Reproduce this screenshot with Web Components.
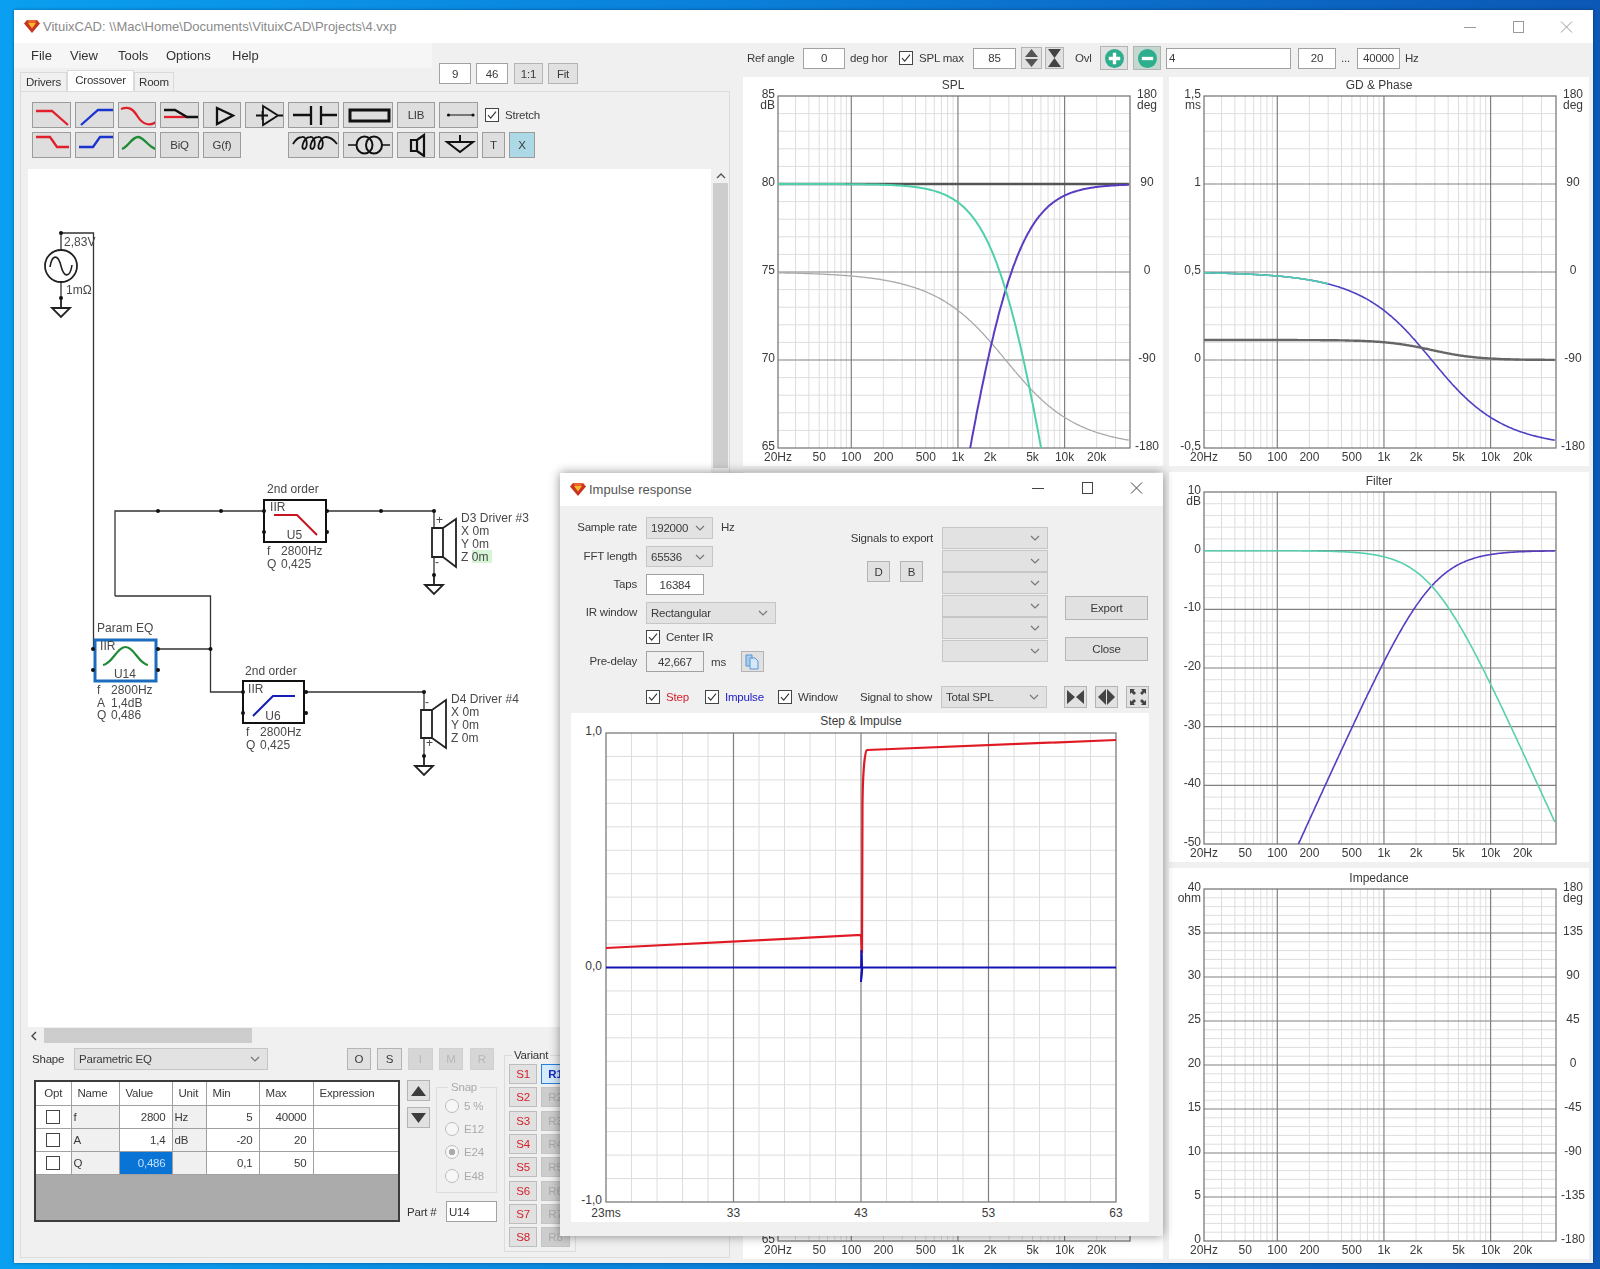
<!DOCTYPE html>
<html>
<head>
<meta charset="utf-8">
<title>VituixCAD</title>
<style>
  html, body { margin: 0; height: 100%; }
  body {
    width: 1600px; height: 1269px; overflow: hidden; box-sizing: border-box;
    padding: 10px 7px 6px 14px; position: relative;
    background: linear-gradient(90deg, #0a9ff0 0, #0a80da 45%, #0c58b6 100%);
    font: 11.5px "Liberation Sans", Arial, sans-serif; letter-spacing: -.2px; color: #333;
  }
  main-window, impulse-dialog { filter: blur(.35px); }
  impulse-dialog { position: absolute; left: 560px; top: 473px; }
</style>
</head>
<body>
<main-window></main-window>
<impulse-dialog></impulse-dialog>

<script>
class Shadow extends HTMLElement {
    constructor() {
        super();
        this.attachShadow({ mode: 'open' });
    }
    connectedCallback() {
        this.shadowRoot.innerHTML = `<style>${this.css()}</style>${this.html()}`;
    }
    css() { return ':host{display:block}'; }
    html() { return '<slot></slot>'; }
}

// ---------- small widgets ----------
class WinBtn extends Shadow {
    css() {
        const w = this.getAttribute('w');
        const h = this.getAttribute('h') || 21;
        return `:host{display:flex;align-items:center;justify-content:center;box-sizing:border-box;
            ${w ? `width:${w}px;` : ''}height:${h}px;background:#e1e1e1;border:1px solid #b4b4b4;color:#3a3a3a;flex:none}
            :host([dim]){color:#b8b8b8;background:#d6d6d6;border-color:#d0d0d0}
            svg{display:block}`;
    }
}
class WinField extends Shadow {
    css() {
        return `:host{display:flex;align-items:center;box-sizing:border-box;flex:none;height:${this.getAttribute('h') || 21}px;
            width:${this.getAttribute('w')}px;background:${this.hasAttribute('gray') ? '#f0f0f0' : '#fff'};border:1px solid #a2a2a2;
            padding:0 2px;justify-content:${this.hasAttribute('left') ? 'flex-start' : 'center'};color:#3a3a3a}`;
    }
}
class WinSelect extends Shadow {
    css() {
        return `:host{display:flex;align-items:center;justify-content:space-between;box-sizing:border-box;flex:none;
            height:${this.getAttribute('h') || 22}px;width:${this.getAttribute('w')}px;background:#e2e2e2;border:1px solid #c6c6c6;
            padding:0 7px 0 4px;color:#3a3a3a}
            svg{display:block}`;
    }
    html() {
        return `<span><slot></slot></span><svg width="10" height="6" viewBox="0 0 10 6"><path d="M1 1l4 4 4-4" fill="none" stroke="#777" stroke-width="1.2"/></svg>`;
    }
}
class WinCheck extends Shadow {
    css() {
        return `:host{display:flex;align-items:center;flex:none;color:${this.getAttribute('color') || '#3a3a3a'}}
            svg{display:block;margin-right:6px}`;
    }
    html() {
        const tick = this.hasAttribute('on') ? '<path d="M3 7.2l2.7 3L11 3.6" fill="none" stroke="#333" stroke-width="1.1"/>' : '';
        return `<svg width="14" height="14" viewBox="0 0 14 14"><rect x=".5" y=".5" width="13" height="13" fill="#fff" stroke="#444"/>${tick}</svg><slot></slot>`;
    }
}
class AppIcon extends Shadow {
    css() { return ':host{display:block;flex:none;width:16px;height:13px}svg{display:block}'; }
    html() {
        return `<svg width="16" height="13" viewBox="0 0 16 13">
            <path d="M0 3.5L3 0h10l3 3.5L8 13z" fill="#c9331f"/>
            <path d="M4 3h8l-4 5.5z" fill="#f6b72c"/>
            <path d="M3 0h10l-2 3H5z" fill="#e8642c"/></svg>`;
    }
}
class CaptionBtns extends Shadow {
    css() {
        return `:host{display:flex;margin-left:auto;gap:var(--cap-gap,31px);padding-right:var(--cap-pad,18px);align-items:center}
            svg{display:block}`;
    }
    html() {
        const c = this.getAttribute('color') || '#888';
        return `<svg width="17" height="12" viewBox="0 0 17 12"><path d="M2 6.5h12" stroke="${c}"/></svg>
            <svg width="17" height="12" viewBox="0 0 17 12"><rect x="3.5" y=".5" width="10" height="11" fill="none" stroke="${c}"/></svg>
            <svg width="17" height="12" viewBox="0 0 17 12"><path d="M3 .5l11 11M14 .5l-11 11" stroke="${c}" fill="none"/></svg>`;
    }
}

// ---------- schematic toolbar glyphs ----------
const stroke = (d, c, w) => `<path d="${d}" fill="none" stroke="${c}" stroke-width="${w || 2.3}"/>`;
const coilPath = () => {
    let d = 'M4 12C7 7 10 5 13 5';
    for (const x of [13, 21, 29]) {
        d += `C${x + 6} 4 ${x + 6} 17 ${x + 2} 17C${x - 2} 17 ${x + 2} 5 ${x + 8} 5`;
    }
    return d + 'C41 5 45 8 48 12';
};
const GLYPHS = {
    lp2: [39, stroke('M3 9H19L35 23', '#e0212b')],
    hp2: [39, stroke('M5 23L22 8H37', '#1b33d0')],
    ap: [39, stroke('M2 7C10 4 14 7 19 15C24 23 31 24 37 20', '#e0212b')],
    shelf: [39, stroke('M3 15H27', '#e0212b') + stroke('M3 8H14L26 15H37', '#111')],
    buf: [39, stroke('M13 6L29 13.5L13 22Z', '#111')],
    amp: [39, stroke('M17 4L32 13.5L17 23ZM32 13.5H38M10 13.5H22M16.5 9V18', '#111', 1.8)],
    cap: [50, stroke('M4 13H22M22 4V23M32 4V23M32 13H48', '#111')],
    res: [50, stroke('M6 8H45V19H6Z', '#111', 3)],
    wire: [39, stroke('M8 13H33', '#111', 1) + '<circle cx="8.5" cy="13" r="1.6" fill="#111"/><circle cx="33" cy="13" r="1.6" fill="#111"/>'],
    lp1: [39, stroke('M3 5H17L24 15H36', '#e0212b')],
    hp1: [39, stroke('M3 15H17L24 5H37', '#1b33d0')],
    bell: [39, stroke('M3 17C9 15 13 5 19 5C25 5 29 15 37 17', '#1e8a34')],
    coil: [50, stroke(coilPath(), '#111', 1.8)],
    xfmr: [50, stroke('M4 13H13M38 13H46', '#111', 1.5) + '<ellipse cx="20.5" cy="13" rx="8" ry="8.5" fill="none" stroke="#111" stroke-width="2"/><ellipse cx="30" cy="13" rx="8" ry="8.5" fill="none" stroke="#111" stroke-width="2"/>'],
    spk: [39, stroke('M13 8H19V19H13ZM19 8L26 3V24L19 19', '#111', 2.2)],
    gnd: [39, stroke('M20 3V10M7 10H33L20 20Z', '#111', 2)]
};
class SchemBtn extends Shadow {
    css() {
        return `:host{display:block;box-sizing:border-box;height:26px;margin-right:4px;background:#dedede;border:1px solid #9c9c9c;overflow:hidden;color:#3a3a3a;
            line-height:24px;text-align:center}
            svg{display:block;margin:-1px auto 0}`;
    }
    html() {
        const g = GLYPHS[this.getAttribute('g')];
        return g ? `<svg width="${g[0]}" height="26" viewBox="0 0 ${g[0]} 26">${g[1]}</svg>` : '<slot></slot>';
    }
}
class SchemToolbar extends Shadow {
    css() {
        return `:host{display:grid;grid-template-columns:43px 43px 42px 43px 42px 43px 55px 54px 42px 43px 27px 26px;
            grid-template-rows:26px 26px;row-gap:4px;height:56px}
            win-check{grid-column:11 / span 3;margin-left:3px}
            .sp{grid-column:6}`;
    }
    html() {
        return `
        <schem-btn g="lp2"></schem-btn><schem-btn g="hp2"></schem-btn><schem-btn g="ap"></schem-btn><schem-btn g="shelf"></schem-btn>
        <schem-btn g="buf"></schem-btn><schem-btn g="amp"></schem-btn><schem-btn g="cap"></schem-btn><schem-btn g="res"></schem-btn>
        <schem-btn>LIB</schem-btn><schem-btn g="wire"></schem-btn><win-check on>Stretch</win-check>
        <schem-btn g="lp1"></schem-btn><schem-btn g="hp1"></schem-btn><schem-btn g="bell"></schem-btn><schem-btn>BiQ</schem-btn>
        <schem-btn>G(f)</schem-btn><span class="sp"></span><schem-btn g="coil"></schem-btn><schem-btn g="xfmr"></schem-btn>
        <schem-btn g="spk"></schem-btn><schem-btn g="gnd"></schem-btn>
        <schem-btn style="margin-right:4px">T</schem-btn><schem-btn style="margin-right:0;background:#add8e6">X</schem-btn>`;
    }
}

// ---------- schematic canvas, a free drawing surface ----------
class SchematicView extends Shadow {
    css() {
        return `:host{display:block;position:relative;background:#fff;overflow:hidden}
            svg{position:absolute;left:0;top:0}
            text{font:12px "Liberation Sans",Arial,sans-serif;letter-spacing:.05px;fill:#484848}`;
    }
    html() {
        const nodes = [[61,233],[61,298],[158,511],[221,511],[381,511],[434,511],[434,575],[210.5,649],[424,692],[424,756],
            [264,511],[264,532],[327,511],[327,532],[93,649],[93,670],[158,649],[158,670],[243,692],[243,713],[306,692],[306,713]];
        const dots = nodes.map(n => `<circle cx="${n[0]}" cy="${n[1]}" r="2" fill="#111"/>`).join('');
        const gnd = (x, y) => `<path d="M${x} ${y - 10}V${y}M${x - 9} ${y}H${x + 9}L${x} ${y + 9}Z" fill="none" stroke="#222" stroke-width="1.8"/>`;
        const t = (x, y, s, a) => `<text x="${x}" y="${y}"${a ? ` text-anchor="${a}"` : ''}>${s}</text>`;
        return `<svg width="682" height="858" viewBox="28 169 682 858">
            <rect x="472" y="550" width="20" height="13" fill="#d6f5d6"/>
            <path d="M61 250V233H93.5V649M115 596V511H264M327 511H434V528M434 557V575M115 596H210.5V692H243M158 649H210.5M306 692H424V710M424 738V756M61 282V298" fill="none" stroke="#333" stroke-width="1.3"/>
            <circle cx="61" cy="266" r="16" fill="#fff" stroke="#222" stroke-width="1.8"/>
            <path d="M50 267C52 254 58 254 61 266C64 278 70 278 72 265" fill="none" stroke="#222" stroke-width="1.6"/>
            ${gnd(61, 308)}${t(64, 246, '2,83V')}${t(66, 294, '1mΩ')}

            <rect x="264" y="500" width="62" height="42" fill="#fff" stroke="#111" stroke-width="2"/>
            <path d="M274 515H297L317 535" fill="none" stroke="#c8141e" stroke-width="2"/>
            ${t(270, 511, 'IIR')}${t(294.5, 539, 'U5', 'middle')}${t(267, 493, '2nd order')}
            ${t(267, 555, 'f')}${t(281, 555, '2800Hz')}${t(267, 568, 'Q')}${t(281, 568, '0,425')}
            <path d="M432 528H443V557H432ZM443 528L456 519V567L443 557" fill="#fff" stroke="#222" stroke-width="1.8"/>
            ${t(436, 524, '+')}${t(435, 566, '-')}${gnd(434, 585)}
            ${t(461, 522, 'D3 Driver #3')}${t(461, 535, 'X 0m')}${t(461, 548, 'Y 0m')}${t(461, 561, 'Z 0m')}

            <rect x="95" y="640" width="61" height="41" fill="#fff" stroke="#1c6cbe" stroke-width="3"/>
            <path d="M103 665C112 664 117 647 125.5 647C134 647 139 664 148 665" fill="none" stroke="#1e8a34" stroke-width="2.2"/>
            ${t(100, 650, 'IIR')}${t(125, 678, 'U14', 'middle')}${t(97, 632, 'Param EQ')}
            ${t(97, 694, 'f')}${t(111, 694, '2800Hz')}${t(97, 707, 'A')}${t(111, 707, '1,4dB')}${t(97, 719, 'Q')}${t(111, 719, '0,486')}

            <rect x="243" y="681" width="61" height="42" fill="#fff" stroke="#111" stroke-width="2"/>
            <path d="M253 716L273 696H295" fill="none" stroke="#1420b4" stroke-width="2"/>
            ${t(248, 693, 'IIR')}${t(273, 720, 'U6', 'middle')}${t(245, 675, '2nd order')}
            ${t(246, 736, 'f')}${t(260, 736, '2800Hz')}${t(246, 749, 'Q')}${t(260, 749, '0,425')}
            <path d="M421 710H432V738H421ZM432 710L446 700V748L432 738" fill="#fff" stroke="#222" stroke-width="1.8"/>
            ${t(425, 706, '-')}${t(426, 747, '+')}${gnd(424, 766)}
            ${t(451, 703, 'D4 Driver #4')}${t(451, 716, 'X 0m')}${t(451, 729, 'Y 0m')}${t(451, 742, 'Z 0m')}
            ${dots}
        </svg>`;
    }
}

// ---------- bottom of the crossover tab ----------
class ParamTable extends Shadow {
    css() {
        return `:host{display:block;box-sizing:border-box;width:366px;height:142px;border:2px solid #3c3c3c;background:#ababab}
            table{border-collapse:collapse;table-layout:fixed;width:100%;background:#fff;color:#3a3a3a}
            td,th{height:23px;padding:0 2px;border:1px solid #a0a0a0;font-weight:normal;text-align:left;box-sizing:border-box;overflow:hidden}
            th{padding-left:6px}
            tr>*:first-child{border-left:0}tr>*:last-child{border-right:0}tr:first-child>*{border-top:0}
            .r{text-align:right;padding-right:6px}
            th.c,.c{text-align:center;padding:0}
            .g{background:#f0f0f0}
            .sel{background:#0a74d6;color:#bfe0ff}
            i{display:block;box-sizing:border-box;width:14px;height:14px;border:1px solid #444;background:#fff;margin:auto}`;
    }
    html() {
        const row = (n, v, u, a, b, sel) => `<tr><td class="c"><i></i></td><td class="g">${n}</td>
            <td class="r ${sel ? 'sel' : ''}">${v}</td><td class="g">${u}</td><td class="r">${a}</td><td class="r">${b}</td><td></td></tr>`;
        return `<table><colgroup><col style="width:35px"><col style="width:48px"><col style="width:53px"><col style="width:34px"><col style="width:53px"><col style="width:54px"><col></colgroup>
            <tr><th class="c">Opt</th><th>Name</th><th>Value</th><th>Unit</th><th>Min</th><th>Max</th><th>Expression</th></tr>
            ${row('f', '2800', 'Hz', '5', '40000')}${row('A', '1,4', 'dB', '-20', '20')}${row('Q', '0,486', '', '0,1', '50', true)}
        </table>`;
    }
}
class SnapGroup extends Shadow {
    css() {
        return `:host{display:block;width:61px;flex:none;color:#aaa}
            fieldset{margin:0;padding:0 0 0 8px;border:1px solid #dcdcdc;height:113px;box-sizing:border-box}
            legend{padding:0 3px;margin-left:3px;line-height:14px}
            div{display:flex;align-items:center;height:23.3px}
            i{display:block;box-sizing:border-box;width:14px;height:14px;border-radius:50%;border:1px solid #bbb;background:#f7f7f7;margin-right:5px}
            i.on{background:radial-gradient(circle,#aaa 0 3px,#f7f7f7 3.5px)}`;
    }
    html() {
        const r = (s, on) => `<div><i class="${on ? 'on' : ''}"></i>${s}</div>`;
        return `<fieldset><legend>Snap</legend>${r('5 %')}${r('E12')}${r('E24', true)}${r('E48')}</fieldset>`;
    }
}
class VariantGroup extends Shadow {
    css() {
        return `:host{display:block;flex:none;width:72px}
            fieldset{margin:0;padding:2px 0 0 4px;border:1px solid #dcdcdc;height:204px;box-sizing:border-box}
            legend{padding:0 2px;margin-left:3px;line-height:14px;color:#333}
            .g{display:grid;grid-template-columns:28px 29px;gap:3.35px 4px;grid-auto-rows:20px}
            b{display:flex;align-items:center;justify-content:center;box-sizing:border-box;font-weight:normal;border:1px solid #bdbdbd}
            .s{background:#e1e1e1;color:#d4202c}
            .d{background:#cdcdcd;color:#aaa;border-color:#c4c4c4}
            .a{background:#d4ebfb;color:#1728c8;border:1px solid #2a7fd8;font-weight:bold}`;
    }
    html() {
        let h = '';
        for (let i = 1; i <= 8; i++) {
            h += `<b class="s">S${i}</b><b class="${i === 1 ? 'a' : 'd'}">R${i}</b>`;
        }
        return `<fieldset><legend>Variant</legend><div class="g">${h}</div></fieldset>`;
    }
}
const triUp = '<svg width="15" height="12" viewBox="0 0 15 12"><path d="M7.5 1L15 11H0z" fill="#3c3c3c"/></svg>';
const triDown = '<svg width="15" height="12" viewBox="0 0 15 12"><path d="M7.5 11L15 1H0z" fill="#3c3c3c"/></svg>';
class PartProps extends Shadow {
    css() {
        return `:host{display:flex;gap:7px;margin-top:5px;padding-left:11px}
            .main{width:465px;flex:none}
            .shape{display:flex;align-items:center;height:22px;padding-right:3px}
            .shape span{width:42px;flex:none}
            .btns{display:flex;gap:6.25px;margin-left:auto}
            .lower{display:flex;margin:10px 0 0 2px}
            .side{display:flex;flex-direction:column;height:142px;width:90px;margin-left:7px;flex:none}
            .top{display:flex;gap:6px}
            .arrows{display:flex;flex-direction:column;gap:6px}
            .part{display:flex;align-items:center;margin-top:auto;justify-content:space-between}`;
    }
    html() {
        return `<div class="main">
            <div class="shape"><span>Shape</span><win-select w="194" h="22">Parametric EQ</win-select>
              <div class="btns"><win-btn w="24.5" h="22">O</win-btn><win-btn w="24.5" h="22">S</win-btn><win-btn w="24.5" h="22" dim>I</win-btn><win-btn w="24.5" h="22" dim>M</win-btn><win-btn w="24.5" h="22" dim>R</win-btn></div></div>
            <div class="lower"><param-table></param-table>
              <div class="side">
                <div class="top"><div class="arrows"><win-btn w="23" h="21">${triUp}</win-btn><win-btn w="23" h="21">${triDown}</win-btn></div><snap-group></snap-group></div>
                <div class="part"><span>Part #</span><win-field w="51" left>U14</win-field></div>
              </div></div>
          </div>
          <variant-group></variant-group>`;
    }
}
class CrossoverPane extends Shadow {
    css() {
        return `:host{display:flex;flex-direction:column;width:723px;flex:none}
            .head{display:flex;height:48px;flex:none}
            .left{width:418px;flex:none}
            .menu{display:flex;height:25px;background:#f6f6f6;padding-left:17px;align-items:center;font-size:13px;letter-spacing:0;color:#333;box-sizing:border-box}
            .menu span:nth-child(1){width:39px}.menu span:nth-child(2){width:48px}.menu span:nth-child(3){width:48px}.menu span:nth-child(4){width:66px}
            .tabs{display:flex;height:23px;padding-left:6px;align-items:flex-end;box-sizing:border-box}
            .tabs span{box-sizing:border-box;height:19px;line-height:18px;background:#f0f0f0;border:1px solid #dadada;border-bottom:0;text-align:center;color:#333}
            .tabs .on{height:21px;background:#fff;line-height:18px;padding-bottom:3px}
            .fields{display:flex;padding:20px 0 0 7px;gap:5px;align-items:flex-start}
            .panel{box-sizing:border-box;margin-left:6px;width:710px;height:1167px;border:1px solid #dcdcdc;padding-top:10px;flex:none}
            schem-toolbar{margin-left:11px}
            .canvas{display:grid;grid-template-columns:683px 17px;grid-template-rows:858px 16px;margin:11px 0 0 7px}
            .v{display:flex;flex-direction:column;align-items:center;padding-left:2px;box-sizing:border-box}
            .v svg{margin-top:4px;flex:none}
            .v i{display:block;width:15px;height:285px;background:#cdcdcd;margin-top:4px}
            .h{display:flex;align-items:center;height:15px;margin-top:1px}
            .h svg{margin:0 7px 0 3px;flex:none}
            .h i{display:block;width:208px;height:15px;background:#cdcdcd}`;
    }
    html() {
        return `<div class="head"><div class="left">
              <div class="menu"><span>File</span><span>View</span><span>Tools</span><span>Options</span><span>Help</span></div>
              <div class="tabs"><span style="width:47px">Drivers</span><span class="on" style="width:67px">Crossover</span><span style="width:40px">Room</span></div>
            </div>
            <div class="fields"><win-field w="32">9</win-field><win-field w="32">46</win-field><win-btn w="29" style="margin-left:1px">1:1</win-btn><win-btn w="30">Fit</win-btn></div>
          </div>
          <div class="panel">
            <schem-toolbar></schem-toolbar>
            <div class="canvas">
              <schematic-view></schematic-view>
              <div class="v"><svg width="10" height="6" viewBox="0 0 10 6"><path d="M1 5l4-4 4 4" fill="none" stroke="#555" stroke-width="1.4"/></svg><i></i></div>
              <div class="h"><svg width="6" height="10" viewBox="0 0 6 10"><path d="M5 1L1 5l4 4" fill="none" stroke="#444" stroke-width="1.4"/></svg><i></i></div>
            </div>
            <part-props></part-props>
          </div>`;
    }
}

// ---------- frequency response charts ----------
const F0 = 2800;
const magLp = f => { const x = f / F0; return 1 / (1 + x * x); };
const db = v => 20 * Math.log10(v);
const phase = f => -2 * (180 / Math.PI) * Math.atan(f / F0);
const CURVES = {
    spl: p => [
        p(phase, 'phase', '#a9a9a9', 1.3),
        p(() => 80, 'l', '#555', 2.4),
        p(f => 80 + db(1 - magLp(f)), 'l', '#5a3cc0', 2),
        p(f => 80 + db(magLp(f)), 'l', '#4fd0ac', 2)
    ],
    gd: p => [
        p(phase, 'phase', '#4d3fc4', 1.6),
        p(phase, 'phase', '#4fd0ac', 1.6, 300),
        p(f => 0.1137 * magLp(f), 'l', '#666', 2.4)
    ],
    filter: p => [
        p(f => db(1 - magLp(f)), 'l', '#5a3cc0', 1.6),
        p(f => db(magLp(f)), 'l', '#58cfae', 1.6)
    ]
};
class LogChart extends Shadow {
    css() {
        return `:host{display:block;background:#fff;overflow:hidden}
            svg{display:block}
            text{font:12px "Liberation Sans",Arial,sans-serif;letter-spacing:0;fill:#3a3a3a}`;
    }
    html() {
        const cfg = JSON.parse(this.getAttribute('data'));
        const W = 352;
        const H = 352;
        const X = 35;
        const Y = cfg.h - 18 - H;
        const fx = f => X + Math.min(W, Math.max(0, 73.3 + (Math.log10(f) - 2) * 106.65));
        const top = cfg.yTop;
        const bot = cfg.yBot;
        const yOf = (v, a, b) => Y + (a - v) / (a - b) * H;
        let g = '';
        // minor verticals
        for (const dec of [10, 100, 1000, 10000]) {
            for (let m = 2; m <= 9; m++) {
                const f = dec * m;
                if (f <= 20 || f >= 40000) continue;
                g += `<line x1="${fx(f)}" x2="${fx(f)}" y1="${Y}" y2="${Y + H}" stroke="#dedede"/>`;
            }
        }
        const n = cfg.major * 5;
        for (let i = 1; i < n; i++) {
            if (i % 5 === 0) continue;
            const y = Y + i * H / n;
            g += `<line x1="${X}" x2="${X + W}" y1="${y}" y2="${y}" stroke="#dedede"/>`;
        }
        for (let i = 1; i < cfg.major; i++) {
            const y = Y + i * H / cfg.major;
            g += `<line x1="${X}" x2="${X + W}" y1="${y}" y2="${y}" stroke="#808080" stroke-width="1.2"/>`;
        }
        for (const f of [100, 1000, 10000]) {
            g += `<line x1="${fx(f)}" x2="${fx(f)}" y1="${Y}" y2="${Y + H}" stroke="#808080" stroke-width="1.2"/>`;
        }
        g += `<rect x="${X}" y="${Y}" width="${W}" height="${H}" fill="none" stroke="#707070" stroke-width="1.2"/>`;

        // curves
        let c = '';
        const plot = (fn, axis, color, sw, fmax) => {
            let d = '';
            const hi = fmax || 40000;
            for (let i = 0; i <= 400; i++) {
                const f = 20 * Math.pow(hi / 20, i / 400);
                const v = fn(f);
                const y = axis === 'phase' ? yOf(v, 180, -180) : yOf(v, top, bot);
                d += `${i ? 'L' : 'M'}${fx(f).toFixed(1)} ${y.toFixed(1)}`;
            }
            return `<path d="${d}" fill="none" stroke="${color}" stroke-width="${sw}"/>`;
        };
        if (cfg.curves) c = CURVES[cfg.curves](plot).join('');

        // labels
        let t = '';
        if (cfg.title) t += `<text x="${X + W / 2 - 1}" y="${Y - 7}" text-anchor="middle">${cfg.title}</text>`;
        (cfg.left || []).forEach((s, i, a) => {
            const y = Y + i * H / (a.length - 1);
            t += `<text x="${X - 3}" y="${y + 2}" text-anchor="end">${s}</text>`;
        });
        if (cfg.lu) t += `<text x="${X - 3}" y="${Y + 13}" text-anchor="end">${cfg.lu}</text>`;
        (cfg.right || []).forEach((s, i, a) => {
            const y = Y + i * H / (a.length - 1);
            t += `<text x="${X + W + 17}" y="${y + 2}" text-anchor="middle">${s}</text>`;
        });
        if (cfg.ru) t += `<text x="${X + W + 17}" y="${Y + 13}" text-anchor="middle">${cfg.ru}</text>`;
        if (cfg.only) t += `<text x="${X - 3}" y="${Y + H + 2}" text-anchor="end">${cfg.only}</text>`;
        [[20, '20Hz'], [50, '50'], [100, '100'], [200, '200'], [500, '500'], [1000, '1k'], [2000, '2k'], [5000, '5k'], [10000, '10k'], [20000, '20k']].forEach(p => {
            const x = p[0] === 20 ? X : fx(p[0]);
            t += `<text x="${x}" y="${Y + H + 13}" text-anchor="middle">${p[1]}</text>`;
        });
        return `<svg width="420" height="${cfg.h}" viewBox="0 0 420 ${cfg.h}">
            <defs><clipPath id="pl"><rect x="${X}" y="${Y}" width="${W}" height="${H}"/></clipPath></defs>
            ${g}<g clip-path="url(#pl)">${c}</g>${t}</svg>`;
    }
}
class TopControls extends Shadow {
    css() {
        return `:host{display:flex;align-items:center;height:34px;box-sizing:border-box;padding:0 0 4px 10px;color:#3a3a3a}
            span{white-space:nowrap;flex:none}
            svg{display:block}`;
    }
    html() {
        const cir = (inner) => `<svg width="19" height="19" viewBox="0 0 20 20"><circle cx="10" cy="10" r="10" fill="#2dae8c"/>${inner}</svg>`;
        return `<span style="width:56px">Ref angle</span>
          <win-field w="42">0</win-field><span style="margin-left:5px;width:44px">deg hor</span>
          <win-check on style="margin-left:5px;width:74px">SPL max</win-check>
          <win-field w="43">85</win-field>
          <win-btn w="21" h="22" style="margin-left:5px"><svg width="13" height="18" viewBox="0 0 13 18"><path d="M6.5 0L13 8H0zM6.5 18L13 10H0z" fill="#555"/></svg></win-btn>
          <win-btn w="19" h="22" style="margin-left:3px"><svg width="13" height="18" viewBox="0 0 13 18"><path d="M0 0H13L6.5 9zM0 18H13L6.5 9z" fill="#444"/></svg></win-btn>
          <span style="margin-left:11px;width:25px">Ovl</span>
          <win-btn w="28" h="24">${cir('<path d="M10 4V16M4 10H16" stroke="#fff" stroke-width="3.5"/>')}</win-btn>
          <win-btn w="28" h="24" style="margin-left:5px;background:#c4d8d0">${cir('<path d="M4 10H16" stroke="#fff" stroke-width="3.5"/>')}</win-btn>
          <win-field w="125" left style="margin-left:5px">4</win-field>
          <win-field w="38" style="margin-left:7px">20</win-field>
          <span style="margin-left:5px;width:16px">...</span>
          <win-field w="43">40000</win-field>
          <span style="margin-left:5px">Hz</span>`;
    }
}
class ChartsPane extends Shadow {
    css() {
        return `:host{display:flex;flex-direction:column;width:856px;flex:none}
            .grid{display:grid;grid-template-columns:420px 420px;grid-template-rows:389px 390px 391px;column-gap:6px;row-gap:6px;margin-left:6px}`;
    }
    html() {
        const j = o => JSON.stringify(o).replace(/"/g, '&quot;');
        const spl = { h: 389, major: 4, title: 'SPL', yTop: 85, yBot: 65, left: ['85', '80', '75', '70', '65'], lu: 'dB', right: ['180', '90', '0', '-90', '-180'], ru: 'deg', curves: 'spl' };
        const gd = { h: 389, major: 4, title: 'GD &amp; Phase', yTop: 1.5, yBot: -0.5, left: ['1,5', '1', '0,5', '0', '-0,5'], lu: 'ms', right: ['180', '90', '0', '-90', '-180'], ru: 'deg', curves: 'gd' };
        const filt = { h: 390, major: 6, title: 'Filter', yTop: 10, yBot: -50, left: ['10', '0', '-10', '-20', '-30', '-40', '-50'], lu: 'dB', curves: 'filter' };
        const imp = { h: 391, major: 8, title: 'Impedance', yTop: 40, yBot: 0, left: ['40', '35', '30', '25', '20', '15', '10', '5', '0'], lu: 'ohm', right: ['180', '135', '90', '45', '0', '-45', '-90', '-135', '-180'], ru: 'deg' };
        const hidden = { h: 391, major: 4, yTop: 85, yBot: 65, only: '65' };
        return `<top-controls></top-controls>
          <div class="grid">
            <log-chart data="${j(spl)}"></log-chart><log-chart data="${j(gd)}"></log-chart>
            <div style="background:#fff"></div><log-chart data="${j(filt)}"></log-chart>
            <log-chart data="${j(hidden)}"></log-chart><log-chart data="${j(imp)}"></log-chart>
          </div>`;
    }
}
class MainWindow extends Shadow {
    css() {
        return `:host{display:flex;flex-direction:column;width:1579px;height:1253px;background:#f0f0f0;box-shadow:0 0 3px rgba(0,0,0,.4)}
            .title{display:flex;align-items:center;height:33px;flex:none;background:#fff;padding-left:10px;color:#8a8a8a;font-size:13px;letter-spacing:0;box-sizing:border-box;--cap-gap:31px;--cap-pad:18px}
            .title span{margin-left:3px}
            .body{display:flex;flex:1}`;
    }
    html() {
        return `<div class="title"><app-icon></app-icon><span>VituixCAD: \\\\Mac\\Home\\Documents\\VituixCAD\\Projects\\4.vxp</span><caption-btns color="#9a9a9a"></caption-btns></div>
          <div class="body"><crossover-pane></crossover-pane><charts-pane></charts-pane></div>`;
    }
}

// ---------- impulse response dialog ----------
class StepChart extends Shadow {
    css() {
        return `:host{display:block;background:#fff;margin:0 14px 0 11px;height:509px;flex:none}
            svg{display:block}
            text{font:12px "Liberation Sans",Arial,sans-serif;letter-spacing:0;fill:#3a3a3a}`;
    }
    html() {
        const X = 35, Y = 20, W = 510, H = 469;
        let g = '';
        for (let i = 1; i < 20; i++) {
            if (i % 5) g += `<line x1="${X + i * 25.5}" x2="${X + i * 25.5}" y1="${Y}" y2="${Y + H}" stroke="#dedede"/>`;
            if (i % 10) g += `<line x1="${X}" x2="${X + W}" y1="${Y + i * H / 20}" y2="${Y + i * H / 20}" stroke="#dedede"/>`;
        }
        for (let i = 1; i < 4; i++) {
            g += `<line x1="${X + i * W / 4}" x2="${X + i * W / 4}" y1="${Y}" y2="${Y + H}" stroke="#808080" stroke-width="1.2"/>`;
        }
        g += `<line x1="${X}" x2="${X + W}" y1="${Y + H / 2}" y2="${Y + H / 2}" stroke="#808080" stroke-width="1.2"/>`;
        g += `<rect x="${X}" y="${Y}" width="${W}" height="${H}" fill="none" stroke="#707070" stroke-width="1.2"/>`;
        const red = 'M35 235L290 222L291 240L291.5 90C292 55 294 38 296 37L545 27';
        const blue = 'M35 254.5H288L290 254.5L290.5 237L291 254.5L290 269L291.5 254.5L293 254.5H545';
        let t = `<text x="${X + W / 2}" y="12" text-anchor="middle">Step &amp; Impulse</text>`;
        [['1,0', Y + 2], ['0,0', Y + H / 2 + 2], ['-1,0', Y + H + 2]].forEach(l => { t += `<text x="${X - 4}" y="${l[1]}" text-anchor="end">${l[0]}</text>`; });
        ['23ms', '33', '43', '53', '63'].forEach((s, i) => { t += `<text x="${X + i * W / 4}" y="${Y + H + 15}" text-anchor="middle">${s}</text>`; });
        return `<svg width="578" height="509" viewBox="0 0 578 509">${g}
            <path d="${blue}" fill="none" stroke="#1414b4" stroke-width="1.8"/>
            <path d="${red}" fill="none" stroke="#e01a24" stroke-width="2.2"/>
            <path d="M290.5 237L291 254.5L290 269" fill="none" stroke="#1414b4" stroke-width="1.8"/>${t}</svg>`;
    }
}
class ImpulseDialog extends Shadow {
    css() {
        return `:host{display:flex;flex-direction:column;width:603px;height:763px;background:#f0f0f0;box-shadow:0 0 10px rgba(0,0,0,.45);color:#3a3a3a}
            .title{display:flex;align-items:center;height:33px;flex:none;background:#fff;padding-left:10px;font-size:13px;letter-spacing:0;color:#555;box-sizing:border-box;--cap-gap:32px;--cap-pad:18px}
            .title span{margin-left:3px}
            caption-btns{margin-bottom:4px}
            .form{display:flex;height:169px;margin-top:11px;flex:none}
            .f{display:grid;grid-template-columns:77px 130px;grid-template-rows:29px 28px 28px 25px 24px 21px;column-gap:9px;width:216px;flex:none}
            .f>span{text-align:right;padding-top:4px}
            .cell{display:flex;align-items:flex-start}
            .sig{width:125px;margin-left:32px;flex:none;display:flex;flex-direction:column;align-items:flex-end;padding-top:15px;box-sizing:border-box}
            .db{display:flex;gap:10px;margin:17px 10px 0 0}
            .sels{width:106px;margin-left:9px;flex:none;padding-top:10px;display:flex;flex-direction:column;gap:.6px}
            .act{margin-left:17px;width:83px;flex:none;padding-top:79px;display:flex;flex-direction:column;gap:17px}
            .checks{display:flex;align-items:center;height:22px;margin-top:0;flex:none;padding-left:86px}
            .checks span{white-space:nowrap;text-align:right}
            .icons{display:flex;gap:8px;margin-left:17px}
            step-chart{margin-top:5px}`;
    }
    html() {
        const six = Array(6).fill('<win-select w="106" h="22"></win-select>').join('');
        const bow = '<svg width="17" height="14" viewBox="0 0 17 14"><path d="M0 0L8 7L0 14ZM17 0L9 7L17 14Z" fill="#444"/></svg>';
        const dia = '<svg width="17" height="16" viewBox="0 0 17 16"><path d="M8 0L0 8L8 16ZM9 0L17 8L9 16Z" fill="#444"/></svg>';
        const exp = '<svg width="16" height="16" viewBox="0 0 16 16"><path d="M0 0H5L3.5 1.5L6 4L4 6L1.5 3.5L0 5ZM16 0V5L14.5 3.5L12 6L10 4L12.5 1.5L11 0ZM0 16V11L1.5 12.5L4 10L6 12L3.5 14.5L5 16ZM16 16H11L12.5 14.5L10 12L12 10L14.5 12.5L16 11Z" fill="#444"/></svg>';
        const copy = '<svg width="14" height="16" viewBox="0 0 14 16"><path d="M1 1H7V12H1Z" fill="#a6cdf0" stroke="#5b96d0"/><path d="M5 4H10L13 7V15H5Z" fill="#d4e8fa" stroke="#5b96d0"/></svg>';
        return `<div class="title"><app-icon></app-icon><span>Impulse response</span><caption-btns color="#444"></caption-btns></div>
          <div class="form">
            <div class="f">
              <span>Sample rate</span><div class="cell"><win-select w="67">192000</win-select><span style="margin:4px 0 0 8px">Hz</span></div>
              <span>FFT length</span><div class="cell"><win-select w="67" h="21">65536</win-select></div>
              <span>Taps</span><div class="cell"><win-field w="58">16384</win-field></div>
              <span>IR window</span><div class="cell"><win-select w="130">Rectangular</win-select></div>
              <span></span><div class="cell" style="padding-top:3px"><win-check on>Center IR</win-check></div>
              <span>Pre-delay</span><div class="cell" style="align-items:center"><win-field w="58" gray>42,667</win-field><span style="margin-left:7px">ms</span><win-btn w="23" style="margin-left:15px">${copy}</win-btn></div>
            </div>
            <div class="sig"><span>Signals to export</span><div class="db"><win-btn w="23">D</win-btn><win-btn w="23">B</win-btn></div></div>
            <div class="sels">${six}</div>
            <div class="act"><win-btn w="83" h="24">Export</win-btn><win-btn w="83" h="24">Close</win-btn></div>
          </div>
          <div class="checks">
            <win-check on color="#d4202c" style="width:59px">Step</win-check>
            <win-check on color="#2020c8" style="width:73px">Impulse</win-check>
            <win-check on style="width:81px">Window</win-check>
            <span style="width:73px">Signal to show</span>
            <win-select w="106" style="margin-left:9px">Total SPL</win-select>
            <div class="icons"><win-btn w="23" h="22">${bow}</win-btn><win-btn w="23" h="22">${dia}</win-btn><win-btn w="23" h="22">${exp}</win-btn></div>
          </div>
          <step-chart></step-chart>`;
    }
}

const ELEMENTS = {
    'win-btn': WinBtn, 'win-field': WinField, 'win-select': WinSelect, 'win-check': WinCheck,
    'app-icon': AppIcon, 'caption-btns': CaptionBtns, 'schem-btn': SchemBtn, 'schem-toolbar': SchemToolbar,
    'schematic-view': SchematicView, 'param-table': ParamTable, 'snap-group': SnapGroup, 'variant-group': VariantGroup,
    'part-props': PartProps, 'crossover-pane': CrossoverPane, 'log-chart': LogChart, 'top-controls': TopControls,
    'charts-pane': ChartsPane, 'main-window': MainWindow, 'step-chart': StepChart, 'impulse-dialog': ImpulseDialog
};
Object.keys(ELEMENTS).forEach(name => customElements.define(name, ELEMENTS[name]));
</script>
</body>
</html>
